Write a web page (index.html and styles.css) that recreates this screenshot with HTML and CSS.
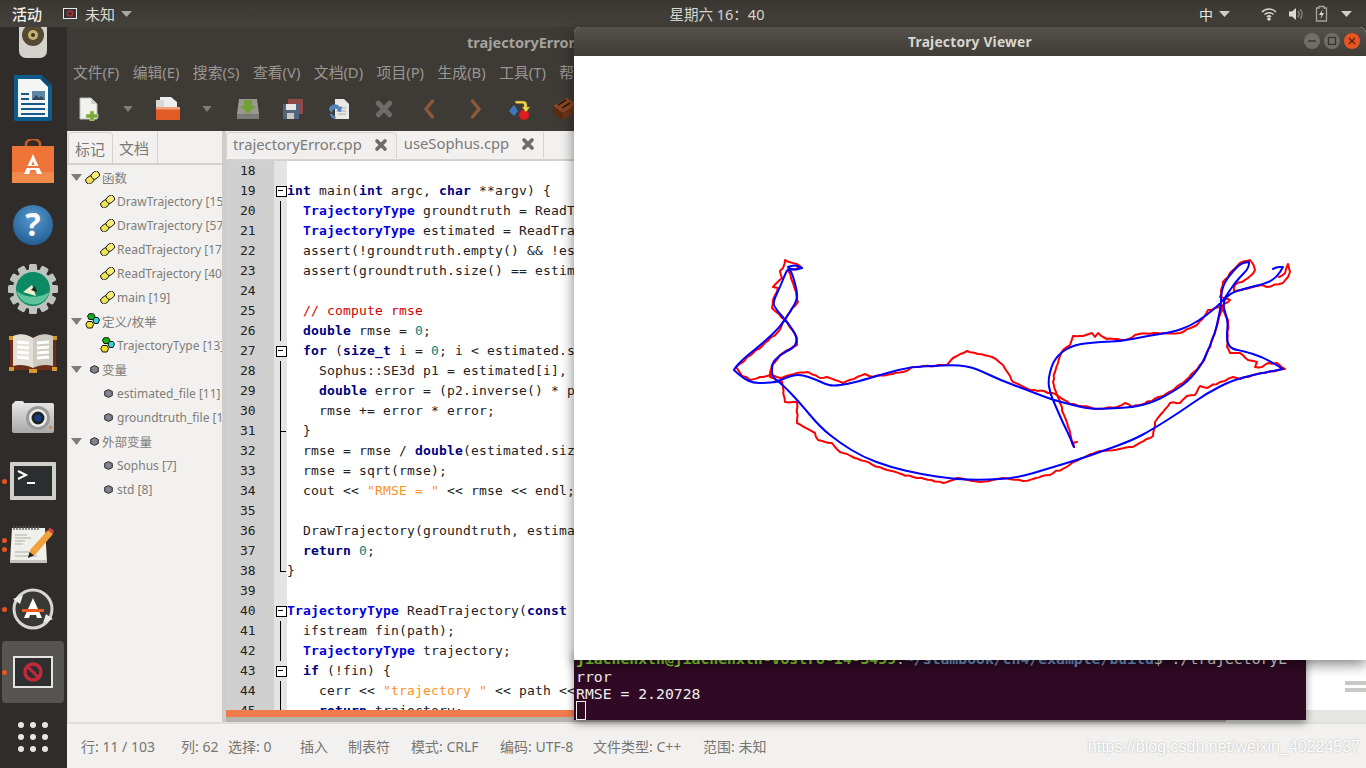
FILE: index.html
```html
<!DOCTYPE html>
<html lang="zh">
<head>
<meta charset="utf-8">
<title>Trajectory Viewer</title>
<link rel="stylesheet" href="styles.css">
</head>
<body>
<svg class="defs" width="0" height="0">
  <defs>
    <symbol id="fn" viewBox="0 0 15 13">
      <rect x="0.700" y="5.600" width="8.400" height="6.600" rx="2.600" transform="rotate(-38 4.900 8.900)" fill="#efe25a" stroke="#111" stroke-width=".9"/>
      <rect x="6.100" y="0.900" width="8.400" height="6.600" rx="2.600" transform="rotate(-38 10.300 4.200)" fill="#f6ec74" stroke="#111" stroke-width=".9"/>
    </symbol>
    <symbol id="en" viewBox="0 0 15 16">
      <path d="M4 .8h4.500L10 3.200 8.500 6.500H4L2.500 3.200z" fill="#12b812" stroke="#111"/>
      <path d="M9.500 4.500h3.500l1.500 2.500-1.500 3.500H9.500L8 7z" fill="#35d6e0" stroke="#111"/>
      <path d="M2.500 8.500h4.500L8.500 11.500 7 15H2.500L.8 11.500z" fill="#f0e22c" stroke="#111"/>
    </symbol>
    <symbol id="va" viewBox="0 0 10 10">
      <path d="M5 .7 9.200 2.700v4.600L5 9.300.8 7.300V2.700z" fill="#85828f" stroke="#111" stroke-width="1"/>
    </symbol>
    <symbol id="tri" viewBox="0 0 11 7">
      <path d="M0 0h11L5.500 7z" fill="#807d78"/>
    </symbol>
    <symbol id="x" viewBox="0 0 14 14">
      <path d="M3 3l8 8M11 3l-8 8" stroke="#6e6c69" stroke-width="3.600" stroke-linecap="round"/>
    </symbol>
  </defs>
</svg>

<div class="desktop">
  <header class="topbar">
    <div class="top-left">
      <span class="activities">活动</span>
      <span class="appmenu">
        <svg class="appicon" width="14" height="11" viewBox="0 0 14 11"><rect x=".5" y=".5" width="13" height="10" fill="#333" stroke="#e8e8e8"/><circle cx="7" cy="5.500" r="2.600" fill="none" stroke="#c22a3a" stroke-width="1.400"/></svg>
        <span class="appname">未知</span>
        <svg class="caret" width="11" height="6" viewBox="0 0 11 6"><path d="M0 0h11L5.500 6z" fill="#aaa7a0"/></svg>
      </span>
    </div>
    <div class="clock">星期六 16：40</div>
    <div class="tray">
      <span class="ime">中</span>
      <svg class="caret" width="11" height="6" viewBox="0 0 11 6"><path d="M0 0h11L5.500 6z" fill="#d0cdc6"/></svg>
      <svg class="tray-ico wifi" width="16" height="14" viewBox="0 0 16 14"><path d="M1 5c4-4 10-4 14 0M3.500 7.500c2.500-2.400 6.500-2.400 9 0M5.800 9.800c1.300-1.100 3.100-1.100 4.400 0" fill="none" stroke="#d8d5ce" stroke-width="1.500"/><circle cx="8" cy="12" r="1.700" fill="#e6e3dc"/></svg>
      <svg class="tray-ico" width="16" height="14" viewBox="0 0 16 14"><path d="M1 4.500h3L8 1v12L4 9.500H1z" fill="#dcd9d2"/><path d="M10 4c1.300 1.700 1.300 4.300 0 6M12.300 2.300c2.200 2.700 2.200 6.700 0 9.400" fill="none" stroke="#8c8a84" stroke-width="1.400"/></svg>
      <svg class="tray-ico" width="13" height="17" viewBox="0 0 13 17"><path d="M4 1.500h5v1.500h2.500v13h-10V3H4z" fill="none" stroke="#a8a59e" stroke-width="1.300"/><path d="M7.500 4.500 4 10h2.500L5.500 14 9 8H6.500z" fill="#dcd9d2"/></svg>
      <svg class="caret last" width="11" height="6" viewBox="0 0 11 6"><path d="M0 0h11L5.500 6z" fill="#d0cdc6"/></svg>
    </div>
  </header>

  <div class="workspace">
    <nav class="dock">
      <ul class="dock-list">
        <li class="dock-item">
          <svg width="34" height="52" viewBox="0 0 34 52"><rect x="3" y="1" width="28" height="50" rx="7" fill="#d4d2cc"/><circle cx="17" cy="28" r="11" fill="#544a34"/><circle cx="17" cy="28" r="5" fill="#c8b270"/><circle cx="17" cy="28" r="2" fill="#3c3426"/></svg>
        </li>
        <li class="dock-item">
          <svg width="42" height="50" viewBox="0 0 42 50"><path d="M2 3h28l10 10v34a2 2 0 0 1-2 2H4a2 2 0 0 1-2-2z" fill="#0d5c8e"/><path d="M30 3v10h10z" fill="#134a70"/><path d="M6 7h22l8 8v30H6z" fill="#f4f6f6"/><path d="M9 21h8v2H9zm0 5h8v2H9zm0 5h24v2H9zm0 5h24v2H9zm0 5h24v2H9z" fill="#14598c"/><rect x="20" y="19" width="13" height="9" fill="#5d88a5"/><path d="M20 28l4-5 3 3 2-2 4 4z" fill="#33495a"/></svg>
        </li>
        <li class="dock-item">
          <svg width="42" height="44" viewBox="0 0 42 44"><path d="M14 8V5a7 5 0 0 1 14 0v3" fill="none" stroke="#cd5a24" stroke-width="2.500"/><path d="M0 7h42v37H0z" fill="#ee7438"/><path d="M0 33h42v11H0z" fill="#f08a4c"/><path d="M21 15l9 20h-5l-1.500-4h-5L17 35h-5z" fill="#fff"/><path d="M12 27h18v2H12z" fill="#ee7438"/><path d="M19.500 26h3l-1.500-4z" fill="#ee7438"/></svg>
        </li>
        <li class="dock-item">
          <svg width="42" height="42" viewBox="0 0 42 42"><defs><radialGradient id="hb" cx=".5" cy=".35" r=".7"><stop offset="0" stop-color="#5a9bcf"/><stop offset="1" stop-color="#1d5a8f"/></radialGradient></defs><circle cx="21" cy="21" r="20" fill="url(#hb)"/><text x="21" y="32" class="help-q">?</text></svg>
        </li>
        <li class="dock-item">
          <svg width="50" height="50" viewBox="0 0 50 50"><circle cx="25" cy="25" r="20" fill="#bfc3c0"/><g fill="#bfc3c0"><rect x="21" y="0" width="8" height="50" rx="1.500"/><rect x="21" y="0" width="8" height="50" rx="1.500" transform="rotate(30 25 25)"/><rect x="21" y="0" width="8" height="50" rx="1.500" transform="rotate(60 25 25)"/><rect x="21" y="0" width="8" height="50" rx="1.500" transform="rotate(90 25 25)"/><rect x="21" y="0" width="8" height="50" rx="1.500" transform="rotate(120 25 25)"/><rect x="21" y="0" width="8" height="50" rx="1.500" transform="rotate(150 25 25)"/></g><circle cx="25" cy="25" r="17" fill="#0c8a63"/><path d="M8.500 27a17 17 0 0 0 33 1C31 35 18 34 8.500 27z" fill="#5fc39e"/><path d="M15 28l9-7 4 11z" fill="#efeccc"/><path d="M23 26l4-4 2 6z" fill="#222"/></svg>
        </li>
        <li class="dock-item">
          <svg width="48" height="42" viewBox="0 0 48 42"><path d="M1 5h46v33H1z" fill="#6b2e1a"/><path d="M0 4h5v4H0zm43 0h5v4h-5zM0 35h5v4H0zm43 0h5v4h-5zM20 37h8v4h-8z" fill="#d7982a"/><path d="M4 4c7-3 14-2 20 2v30c-6-3-13-4-20-2z" fill="#e4e0d8"/><path d="M44 4c-7-3-14-2-20 2v30c6-3 13-4 20-2z" fill="#cfcac0"/><path d="M8 10l12 1M8 15l12 1M8 20l12 1M8 25l12 1M28 11l12-1M28 16l12-1M28 21l12-1M28 26l12-1" stroke="#fff" stroke-width="3"/></svg>
        </li>
        <li class="dock-item">
          <svg width="44" height="34" viewBox="0 0 44 34"><defs><linearGradient id="cam" x1="0" y1="0" x2="0" y2="1"><stop offset="0" stop-color="#e4e4e4"/><stop offset="1" stop-color="#a9a9a9"/></linearGradient></defs><rect x="1" y="3" width="42" height="30" rx="2" fill="url(#cam)"/><rect x="3" y="1" width="10" height="4" rx="2" fill="#e6e6e6"/><circle cx="27" cy="18" r="12" fill="#9a9a9a"/><circle cx="27" cy="18" r="9" fill="#eeeeee"/><circle cx="27" cy="18" r="6.500" fill="#222"/><circle cx="27" cy="18" r="3.500" fill="#123a88"/><rect x="38" y="26" width="3" height="3" fill="#e08a24"/></svg>
        </li>
        <li class="dock-item running">
          <svg width="46" height="38" viewBox="0 0 46 38"><rect width="46" height="38" rx="1" fill="#cfcfcc"/><rect x="4" y="4" width="38" height="30" fill="#2b2d2e"/><path d="M8 9l8 4-8 4" fill="none" stroke="#fff" stroke-width="2"/><path d="M17 20h8v2h-8z" fill="#fff"/></svg>
        </li>
        <li class="dock-item running double">
          <svg width="46" height="38" viewBox="0 0 46 38"><path d="M2 2h33l2 34H0z" fill="#f0f0ea"/><path d="M0 34h37v3H0z" fill="#c4c4be"/><path d="M4 0v4m3-4v4m3-4v4m3-4v4m3-4v4m3-4v4m3-4v4m3-4v4m3-4v4" stroke="#555" stroke-width="1.300"/><path d="M5 9h12M5 12h16M5 15h10M5 18h8M5 26h14M5 30h22" stroke="#aaa" stroke-width="1"/><path d="M20 24 38 4l5 4-18 21-6 2z" fill="#f2a23a"/><path d="M38 4l2-2.500 4 3.500-1 3z" fill="#d8404a"/><path d="M18 32l1.500-6 4.500 3.500z" fill="#222"/></svg>
        </li>
        <li class="dock-item running">
          <svg width="44" height="44" viewBox="0 0 44 44"><circle cx="22" cy="22" r="19" fill="#3a3835" stroke="#d6d6d4" stroke-width="3"/><path d="M22 11l9 20h-5l-1-3h-6l-1 3h-5z" fill="#fff"/><path d="M11 22h22v3H11z" fill="#e85a1e"/><path d="M2 12l10-4-3 9zM42 32l-10 4 3-9z" fill="#e9e9e7"/></svg>
        </li>
        <li class="dock-item running active">
          <svg width="40" height="32" viewBox="0 0 40 32"><rect x="1" y="1" width="38" height="30" fill="#2f2f2f" stroke="#e4e4e2" stroke-width="2"/><circle cx="20" cy="16" r="8" fill="none" stroke="#c2283a" stroke-width="3.500"/><path d="M14.500 10.500l11 11" stroke="#c2283a" stroke-width="3"/></svg>
        </li>
        <li class="dock-item">
          <svg width="32" height="32" viewBox="0 0 32 32" fill="#e8e6e3"><circle cx="4" cy="4" r="3"/><circle cx="16" cy="4" r="3"/><circle cx="28" cy="4" r="3"/><circle cx="4" cy="16" r="3"/><circle cx="16" cy="16" r="3"/><circle cx="28" cy="16" r="3"/><circle cx="4" cy="28" r="3"/><circle cx="16" cy="28" r="3"/><circle cx="28" cy="28" r="3"/></svg>
        </li>
      </ul>
    </nav>

    <main class="geany">
      <div class="g-title">trajectoryError.cpp - /home/slambook/ch4/example - Geany</div>
      <div class="menubar">
        <span>文件(F)</span><span>编辑(E)</span><span>搜索(S)</span><span>查看(V)</span><span>文档(D)</span><span>项目(P)</span><span>生成(B)</span><span>工具(T)</span><span>帮助(H)</span>
      </div>
      <div class="toolbar">
        <svg class="t-new" width="24" height="24" viewBox="0 0 24 24"><path d="M2 1h11l6 6v15H2z" fill="#f1f1ee" stroke="#bdbdb8"/><path d="M13 7V1l6 6z" fill="#cfcfca"/><path d="M12 14h4v3h4v4h-4v3h-4v-3H8v-4h4z" fill="#7ba93c" stroke="#d8e6c0" stroke-width=".6"/></svg>
        <svg class="t-drop" width="10" height="6"><use href="#tri"/></svg>
        <svg class="t-open" width="26" height="24" viewBox="0 0 26 24"><path d="M5 0h11l6 5v8H5z" fill="#eee"/><path d="M1 3h8v9H1z" fill="#d8d8d4"/><path d="M1 10h24v13H1z" fill="#e35c28"/><path d="M1 10h24v2.500H1z" fill="#f2a07a"/></svg>
        <svg class="t-drop" width="10" height="6"><use href="#tri"/></svg>
        <svg class="t-save" width="24" height="22" viewBox="0 0 24 22"><path d="M3 1h18l2 15v5H1v-5z" fill="#9a9892"/><path d="M1 16h22v5H1z" fill="#7d7b75"/><path d="M8 2h8v6h4l-8 8-8-8h4z" fill="#74a034"/></svg>
        <svg class="t-saveall" width="22" height="22" viewBox="0 0 22 22"><rect x="6" y="1" width="15" height="15" fill="#8f4a48"/><rect x="1" y="6" width="16" height="15" fill="#51667c"/><rect x="4" y="6" width="10" height="6" fill="#e6e6e6"/><rect x="5" y="15" width="7" height="6" fill="#c7c7c7"/></svg>
        <svg class="t-reload" width="22" height="22" viewBox="0 0 22 22"><path d="M7 1h9l5 5v15H7z" fill="#e8e8e6"/><path d="M10 10h8M10 13h8M10 16h8" stroke="#aaa"/><path d="M1 12a6 6 0 0 1 11-3l2-1-1 6-5-1 2-1a3.500 3.500 0 0 0-6 3z" fill="#4f86bd"/><path d="M2 15l6 4-1 2a6 6 0 0 1-5-6z" fill="#4f86bd"/></svg>
        <svg class="t-close" width="20" height="20" viewBox="0 0 14 14"><use href="#x"/></svg>
        <svg class="t-back" width="12" height="20" viewBox="0 0 12 20"><path d="M9.500 2 3 10l6.500 8" fill="none" stroke="#8b5a3a" stroke-width="3.400" stroke-linecap="round"/></svg>
        <svg class="t-fwd" width="12" height="20" viewBox="0 0 12 20"><path d="M2.500 2 9 10l-6.500 8" fill="none" stroke="#8b5a3a" stroke-width="3.400" stroke-linecap="round"/></svg>
        <svg class="t-comp" width="24" height="24" viewBox="0 0 24 24"><path d="M6 8 10 14 6 19 1 14z" fill="#3f78c0"/><circle cx="16" cy="18" r="5" fill="#e01b22"/><path d="M7 4h8c3 0 4 2 4 4v2h3l-4 5-4-5h2V8c0-1-.5-1.500-2-1.500H8z" fill="#f1d84a" stroke="#8b7a22" stroke-width=".5"/></svg>
        <svg class="t-build" width="26" height="24" viewBox="0 0 26 24"><path d="M1 9 15 1l10 6-14 9z" fill="#8d4522"/><path d="M1 9l10 7v7L1 16z" fill="#5b2c14"/><path d="M11 16 25 7v7L11 23z" fill="#6e3519"/><path d="M6 8l8-5M10 11l8-5" stroke="#2c1a0f" stroke-width="1.500"/></svg>
      </div>

      <div class="panes">
        <aside class="sidebar">
          <div class="side-tabs">
            <span class="side-tab on">标记</span><span class="side-tab">文档</span>
          </div>
          <ul class="tree">
            <li class="group"><svg class="arrow"><use href="#tri"/></svg><svg class="ico16" viewBox="0 0 15 13"><use href="#fn"/></svg>函数</li>
            <li class="leaf"><svg class="ico16" viewBox="0 0 15 13"><use href="#fn"/></svg>DrawTrajectory [15]</li>
            <li class="leaf"><svg class="ico16" viewBox="0 0 15 13"><use href="#fn"/></svg>DrawTrajectory [57]</li>
            <li class="leaf"><svg class="ico16" viewBox="0 0 15 13"><use href="#fn"/></svg>ReadTrajectory [17]</li>
            <li class="leaf"><svg class="ico16" viewBox="0 0 15 13"><use href="#fn"/></svg>ReadTrajectory [40]</li>
            <li class="leaf"><svg class="ico16" viewBox="0 0 15 13"><use href="#fn"/></svg>main [19]</li>
            <li class="group"><svg class="arrow"><use href="#tri"/></svg><svg class="ico16 tall" viewBox="0 0 15 16"><use href="#en"/></svg>定义/枚举</li>
            <li class="leaf"><svg class="ico16 tall" viewBox="0 0 15 16"><use href="#en"/></svg>TrajectoryType [13]</li>
            <li class="group var"><svg class="arrow"><use href="#tri"/></svg><svg class="ico10" viewBox="0 0 10 10"><use href="#va"/></svg>变量</li>
            <li class="leaf var"><svg class="ico10" viewBox="0 0 10 10"><use href="#va"/></svg>estimated_file [11]</li>
            <li class="leaf var"><svg class="ico10" viewBox="0 0 10 10"><use href="#va"/></svg>groundtruth_file [10]</li>
            <li class="group var"><svg class="arrow"><use href="#tri"/></svg><svg class="ico10" viewBox="0 0 10 10"><use href="#va"/></svg>外部变量</li>
            <li class="leaf var"><svg class="ico10" viewBox="0 0 10 10"><use href="#va"/></svg>Sophus [7]</li>
            <li class="leaf var"><svg class="ico10" viewBox="0 0 10 10"><use href="#va"/></svg>std [8]</li>
          </ul>
        </aside>
        <div class="side-scroll"></div>
        <section class="editor">
          <div class="doc-tabs">
            <span class="doc-tab on">trajectoryError.cpp<svg class="tab-x" width="14" height="14"><use href="#x"/></svg></span>
            <span class="doc-tab">useSophus.cpp<svg class="tab-x" width="14" height="14"><use href="#x"/></svg></span>
          </div>
          <div class="code">
            <div class="ln"><b>18</b><i></i><code></code></div>
            <div class="ln"><b>19</b><i class="box"></i><code><span class="k">int</span> main(<span class="k">int</span> argc, <span class="k">char</span> **argv) {</code></div>
            <div class="ln"><b>20</b><i class="bar"></i><code>  <span class="t">TrajectoryType</span> groundtruth = ReadTrajectory(groundtruth_file);</code></div>
            <div class="ln"><b>21</b><i class="bar"></i><code>  <span class="t">TrajectoryType</span> estimated = ReadTrajectory(estimated_file);</code></div>
            <div class="ln"><b>22</b><i class="bar"></i><code>  assert(!groundtruth.empty() &amp;&amp; !estimated.empty());</code></div>
            <div class="ln"><b>23</b><i class="bar"></i><code>  assert(groundtruth.size() == estimated.size());</code></div>
            <div class="ln"><b>24</b><i class="bar"></i><code></code></div>
            <div class="ln"><b>25</b><i class="bar"></i><code>  <span class="c">// compute rmse</span></code></div>
            <div class="ln"><b>26</b><i class="bar"></i><code>  <span class="k">double</span> rmse = <span class="n">0</span>;</code></div>
            <div class="ln"><b>27</b><i class="box"></i><code>  <span class="k">for</span> (<span class="k">size_t</span> i = <span class="n">0</span>; i &lt; estimated.size(); i++) {</code></div>
            <div class="ln"><b>28</b><i class="bar"></i><code>    Sophus::SE3d p1 = estimated[i], p2 = groundtruth[i];</code></div>
            <div class="ln"><b>29</b><i class="bar"></i><code>    <span class="k">double</span> error = (p2.inverse() * p1).log().norm();</code></div>
            <div class="ln"><b>30</b><i class="bar"></i><code>    rmse += error * error;</code></div>
            <div class="ln"><b>31</b><i class="tick"></i><code>  }</code></div>
            <div class="ln"><b>32</b><i class="bar"></i><code>  rmse = rmse / <span class="k">double</span>(estimated.size());</code></div>
            <div class="ln"><b>33</b><i class="bar"></i><code>  rmse = sqrt(rmse);</code></div>
            <div class="ln"><b>34</b><i class="bar"></i><code>  cout &lt;&lt; <span class="s">"RMSE = "</span> &lt;&lt; rmse &lt;&lt; endl;</code></div>
            <div class="ln"><b>35</b><i class="bar"></i><code></code></div>
            <div class="ln"><b>36</b><i class="bar"></i><code>  DrawTrajectory(groundtruth, estimated);</code></div>
            <div class="ln"><b>37</b><i class="bar"></i><code>  <span class="k">return</span> <span class="n">0</span>;</code></div>
            <div class="ln"><b>38</b><i class="end"></i><code>}</code></div>
            <div class="ln"><b>39</b><i></i><code></code></div>
            <div class="ln"><b>40</b><i class="box"></i><code><span class="t">TrajectoryType</span> ReadTrajectory(<span class="k">const</span> string &amp;path) {</code></div>
            <div class="ln"><b>41</b><i class="bar"></i><code>  ifstream fin(path);</code></div>
            <div class="ln"><b>42</b><i class="bar"></i><code>  <span class="t">TrajectoryType</span> trajectory;</code></div>
            <div class="ln"><b>43</b><i class="box"></i><code>  <span class="k">if</span> (!fin) {</code></div>
            <div class="ln"><b>44</b><i class="bar"></i><code>    cerr &lt;&lt; <span class="s">"trajectory "</span> &lt;&lt; path &lt;&lt; <span class="s">" not found."</span> &lt;&lt; endl;</code></div>
            <div class="ln"><b>45</b><i class="bar"></i><code>    <span class="k">return</span> trajectory;</code></div>
          </div>
          <div class="orange"></div>
          <div class="hscroll"></div>
          <div class="minimap"></div>
        </section>
      </div>

      <footer class="status">
        <span class="s-line">行: 11 / 103</span>
        <span class="s-col">列: 62</span>
        <span class="s-sel">选择: 0</span>
        <span class="s-ins">插入</span>
        <span class="s-tab">制表符</span>
        <span class="s-mode">模式: CRLF</span>
        <span class="s-enc">编码: UTF-8</span>
        <span class="s-type">文件类型: C++</span>
        <span class="s-scope">范围: 未知</span>
        <span class="watermark">https://blog.csdn.net/weixin_40224537</span>
      </footer>
    </main>
  </div>

  <section class="terminal">
    <div class="t-l"><span class="p-g">jiachenxth@jiachenxth-Vostro-14-3459</span>:<span class="p-b">~/slambook/ch4/example/build</span>$ ./trajectoryE</div>
    <div class="t-l">rror</div>
    <div class="t-l">RMSE = 2.20728</div>
    <div class="cursor"></div>
  </section>

  <section class="viewer">
    <div class="v-title">
      <span>Trajectory Viewer</span>
      <div class="v-btns">
        <svg width="16" height="16" viewBox="0 0 16 16"><circle cx="8" cy="8" r="8" fill="#716e68"/><path d="M4 8h8" stroke="#35332f" stroke-width="1.300"/></svg>
        <svg width="16" height="16" viewBox="0 0 16 16"><circle cx="8" cy="8" r="8" fill="#716e68"/><rect x="4.500" y="4.500" width="7" height="7" fill="none" stroke="#35332f" stroke-width="1.200"/></svg>
        <svg width="16" height="16" viewBox="0 0 16 16"><circle cx="8" cy="8" r="8" fill="#e95420"/><path d="M5 5l6 6M11 5l-6 6" stroke="#4a2312" stroke-width="1.200"/></svg>
      </div>
    </div>
    <svg class="plot" width="792" height="604" viewBox="574 56 792 604">
      <g fill="none" stroke-width="2" stroke-linejoin="round" stroke-linecap="round">
        <polyline class="noisy" stroke="#f00" points="1077,442 1072,443 1074,447 1071,437 1068,427 1064,415 1060,403 1056,392 1053,382 1055,372 1058,363 1060,356 1063,350 1070,345 1073,336 1083,336 1092,333 1095,337 1098,333 1103,337 1107,339 1125,340 1135,335 1157,333 1180,333 1197,325 1204,317 1208,310 1222,306 1230,300 1220,297 1221,290 1223,282 1232,271 1240,263 1250,260 1253,264 1255,270 1248,278 1235,285 1234,292 1253,287 1262,285 1267,287 1283,283 1288,277 1290,272 1288,264 1285,273 1279,277"/>
        <polyline class="noisy" stroke="#f00" points="1222,306 1218,322 1213,337 1208,350 1202,363 1183,383 1163,396 1140,405 1132,407 1125,403 1117,407 1097,409 1070,404 1057,395 1044,391 1030,390 1013,382 1008,373 1003,365 992,357 978,354 967,351 953,358 947,365 912,367 903,372 873,377 865,374 843,383 835,380 827,377 820,378 808,372 790,375 780,378 770,375 760,377 750,380 742,376 736,367 753,353 777,333 790,312 798,302 796,292 793,283 788,270 802,268 797,264 785,260 783,268 780,271 782,278 773,287 778,288 773,300 772,308 785,320 797,338 797,345 780,355 772,365 770,377 782,382 785,402 797,402 797,423 815,433 818,440 832,443 840,452 887,470 913,477 943,483 957,478 980,482 1003,478 1023,481 1050,475 1080,459 1097,452 1133,447 1153,436 1155,422 1163,412 1170,403 1180,403 1187,396 1195,395 1200,386 1207,388 1220,382 1233,377 1240,379 1257,374 1285,369 1277,363 1268,363 1262,367 1255,367 1257,362 1248,360 1240,353 1230,353 1227,347 1228,320 1222,306"/>
        <polyline class="smooth" stroke="#00f" points="1074,447 1069,435 1063,423 1056,407 1050,393 1048,380 1052,365 1056,358 1062,352 1070,347 1080,344 1090,343 1100,342 1123,341 1147,336 1173,332 1190,326 1207,315 1222,302 1228,293 1235,283 1241,276 1247,270 1249,265 1249,262 1249,262 1242,263 1236,268 1230,275 1225,282 1222,290 1221,298 1221,305 1218,320 1215,333 1209,348 1203,362 1196,372 1187,382 1177,389 1167,395 1155,401 1143,405 1132,407 1120,408 1097,409 1085,408 1073,405 1053,400 1027,390 1000,380 977,369 965,366 953,365 933,366 910,367 887,373 863,380 848,384 833,386 825,384 817,380 800,374 787,377 777,382 765,383 753,383 743,378 735,371 734,370 734,370 735,368 743,359 763,343 780,327 790,312 797,300 797,293 796,287 792,273 788,267 788,267 795,265 802,268 802,268 795,270 788,268 784,277 780,287 773,302 775,308 787,322 793,330 797,338 795,347 785,352 778,357 773,362 772,367 772,377 783,385 800,403 820,427 840,443 863,457 890,467 920,474 953,479 983,480 1017,478 1050,468 1080,459 1100,452 1133,440 1153,429 1180,412 1207,393 1233,380 1257,374 1283,369 1283,369 1263,357 1243,351 1232,349 1227,343 1227,332 1228,320 1222,303 1230,293 1247,288 1267,283 1277,277 1283,267 1283,267 1277,267 1273,269"/>
      </g>
    </svg>
  </section>
</div>
<script src="plot.js"></script>
</body>
</html>
```

FILE: styles.css
```css
* { box-sizing: border-box; margin: 0; padding: 0; }
html, body { width: 1366px; height: 768px; overflow: hidden; }
body { font-family: "Noto Sans", "Noto Sans CJK SC", sans-serif; background: #2f2c2a; position: relative; }
ul { list-style: none; }
.defs { position: absolute; }

.desktop { width: 1366px; height: 768px; display: flex; flex-direction: column; position: relative; overflow: hidden; }

/* top bar */
.topbar { height: 27px; flex: none; display: grid; grid-template-columns: 1fr auto 1fr; align-items: center; background: linear-gradient(#3a3733, #45423c); color: #e8e6e1; font-size: 15px; position: relative; z-index: 3; }
.top-left { display: flex; align-items: center; }
.activities { margin-left: 12px; color: #f2f0ec; font-weight: 500; }
.appmenu { margin-left: 21px; display: flex; align-items: center; color: #dedbd5; }
.appname { margin-left: 8px; }
.appmenu .caret { margin-left: 6px; }
.clock { color: #d9d6d0; font-size: 14.500px; padding-left: 68px; }
.tray { display: flex; align-items: center; justify-content: flex-end; padding-right: 14px; }
.ime { color: #e8e6e1; font-size: 14px; margin-right: 6px; }
.tray .wifi { margin-left: 31px; }
.tray-ico { margin-left: 11px; }
.tray .caret.last { margin-left: 13px; }

/* layout */
.workspace { flex: 1; display: flex; min-height: 0; }

/* dock */
.dock { width: 67px; flex: none; background: #302c2a; overflow: hidden; }
.dock-list { margin-top: -26px; display: flex; flex-direction: column; }
.dock-item { height: 64px; flex: none; display: flex; align-items: center; justify-content: center; position: relative; margin: 0 3px 0 2px; border-radius: 4px; }
.dock-item.active { background: #575552; height: 62px; margin-bottom: 2px; }
.dock-item.running::before { content: ""; position: absolute; left: 0; top: 50%; width: 5px; height: 5px; margin-top: -2.500px; border-radius: 50%; background: #e95420; }
.dock-item.double::before { margin-top: -7px; box-shadow: 0 9px 0 #e95420; }
.help-q { font-family: "Noto Sans", sans-serif; font-size: 32px; font-weight: 700; fill: #fff; text-anchor: middle; }

/* geany */
.geany { flex: 1; min-width: 0; display: flex; flex-direction: column; background: #3e3b37; }
.g-title { height: 30px; flex: none; padding-left: 400px; display: flex; align-items: center; justify-content: flex-start; font-size: 14.500px; font-weight: 700; color: #a5a29c; white-space: nowrap; overflow: hidden; }
.menubar { height: 30px; flex: none; display: flex; align-items: center; gap: 13.500px; padding: 0 0 2px 6px; font-size: 14.800px; color: #9a9792; white-space: nowrap; }
.menubar span { flex: none; }
.toolbar { height: 44px; flex: none; display: flex; align-items: center; padding-left: 11px; }
.t-drop { margin-left: 21px; }
.t-open { margin-left: 22px; }
.t-open + .t-drop { margin-left: 21px; }
.t-save { margin-left: 24px; }
.t-saveall { margin-left: 22px; }
.t-reload { margin-left: 24px; }
.t-close { margin-left: 24px; }
.t-back { margin-left: 29px; }
.t-fwd { margin-left: 35px; }
.t-comp { margin-left: 26px; }
.t-build { margin-left: 20px; }

.panes { flex: 1; min-height: 0; display: flex; background: #f2f1ef; }

/* sidebar */
.sidebar { width: 155px; flex: none; background: #f2f1ef; color: #7f7d79; font-size: 12px; overflow: hidden; border-left: 1px solid #dcdad7; }
.side-tabs { height: 34px; display: flex; align-items: stretch; border-bottom: 2px solid #d4d2ce; padding-top: 1px; }
.side-tab { width: 45px; padding-left: 6px; font-size: 15px; line-height: 32px; color: #7a7875; border-right: 1px solid #d4d2ce; white-space: nowrap; }
.side-tab.on { border-radius: 4px 4px 0 0; border: 1px solid #d4d2ce; border-bottom: none; }
.tree li { height: 24px; display: flex; align-items: center; white-space: nowrap; }
.tree .group { font-size: 12.500px; }
.arrow { width: 11px; height: 7px; margin-left: 3px; flex: none; }
.ico16 { width: 15px; height: 13px; flex: none; margin-left: 3px; margin-right: 2px; }
.ico16.tall { height: 16px; }
.ico10 { width: 9px; height: 9px; flex: none; margin-left: 8px; margin-right: 3px; }
.leaf { padding-left: 29px; }
.leaf.var { padding-left: 28px; }
.leaf.var .ico10 { margin-left: 8px; margin-right: 4px; }

.side-scroll { width: 4px; flex: none; background: #cfcdc9; }

/* editor */
.editor { flex: 1; min-width: 0; display: flex; flex-direction: column; position: relative; background: #fff; }
.doc-tabs { height: 30px; flex: none; display: flex; background: #f2f1ef; border-bottom: 2px solid #d4d2ce; padding-top: 1px; }
.doc-tab { height: 26px; padding-left: 7px; font-size: 14.800px; line-height: 23px; color: #7c7a77; display: flex; align-items: flex-start; white-space: nowrap; border-right: 1px solid #d4d2ce; }
.doc-tab.on { padding-left: 6px; border: 1px solid #d4d2ce; border-bottom: none; border-radius: 4px 4px 0 0; background: #f0efed; }
.tab-x { margin: 5px 8px 0 12px; flex: none; }

.code { flex: 1; min-height: 0; overflow: hidden; font-family: "DejaVu Sans Mono", monospace; font-size: 13px; background: #fff; }
.ln { height: 20px; display: flex; line-height: 20px; }
.ln b { width: 48px; flex: none; background: #cfcfcf; color: #222; font-weight: 400; text-align: left; padding-left: 14px; }
.ln i { width: 13px; flex: none; background: #e4e4e4; position: relative; display: block; }
.ln code { font-family: inherit; white-space: pre; letter-spacing: .17px; color: #222; }
.k { color: #00007f; font-weight: 700; }
.t { color: #0000d8; font-weight: 700; }
.s { color: #ff901e; }
.c { color: #d00000; }
.n { color: #007f7f; }
.bar::before, .tick::before, .end::before { content: ""; position: absolute; left: 6px; top: 0; bottom: 0; width: 1px; background: #000; }
.end::before { bottom: 10px; }
.tick::after, .end::after { content: ""; position: absolute; left: 6px; top: 10px; width: 6px; height: 1px; background: #000; }
.box::before { content: ""; position: absolute; left: 2px; top: 5px; width: 9px; height: 9px; border: 1px solid #000; background: #fff; z-index: 1; }
.box::after { content: ""; position: absolute; left: 4px; top: 9px; width: 5px; height: 1px; background: #000; z-index: 2; }
.orange { height: 7px; flex: none; background: linear-gradient(90deg, #ef7b4f 0 1000px, #e6e6e3 1000px); }
.hscroll { height: 5px; flex: none; background: linear-gradient(90deg, #b5b4af 0 1000px, #e6e6e3 1000px); }
.minimap { position: absolute; right: 0; top: 550px; width: 21px; height: 12px; background: repeating-linear-gradient(#c8c8c4 0 4px, #fff 4px 7px); }

/* status */
.status { height: 46px; flex: none; display: flex; align-items: center; padding-left: 14px; background: #f2f1ef; color: #777572; font-size: 14px; white-space: nowrap; border-top: 2px solid #dfded9; position: relative; }
.status span { flex: none; }
.s-line { width: 100px; }
.s-col { width: 47px; }
.s-sel { width: 72px; }
.s-ins { width: 48px; }
.s-tab { width: 63px; }
.s-mode { width: 89px; }
.s-enc { width: 93px; }
.s-type { width: 110px; }
.status .watermark { position: absolute; right: 6px; top: 14px; font-family: "Liberation Sans", sans-serif; font-size: 16px; color: #fff; text-shadow: 0 0 2px #a8a7a4; }

/* terminal window */
.terminal { position: absolute; left: 574px; top: 650px; width: 732px; height: 70px; background: #300a24; color: #eeeeec; font-family: "DejaVu Sans Mono", monospace; font-size: 14.770px; line-height: 18px; padding: 0 0 0 2px; overflow: hidden; box-shadow: 0 3px 8px rgba(0,0,0,.45); z-index: 4; }
.t-l { height: 17.500px; white-space: pre; }
.p-g { color: #8ae234; font-weight: 700; }
.p-b { color: #729fcf; font-weight: 700; }
.cursor { position: absolute; left: 2px; bottom: 0; width: 10px; height: 19px; border: 1px solid #eeeeec; }

/* viewer window */
.viewer { position: absolute; left: 574px; top: 27px; width: 792px; height: 633px; background: #fff; border-radius: 6px 6px 0 0; box-shadow: 0 4px 14px rgba(0,0,0,.5); z-index: 5; display: flex; flex-direction: column; }
.v-title { height: 29px; flex: none; display: flex; align-items: center; justify-content: center; position: relative; background: linear-gradient(#54514b, #403d38); color: #d8d5cf; font-size: 13.800px; font-weight: 700; border-radius: 6px 6px 0 0; letter-spacing: .2px; }
.v-btns { position: absolute; right: 6px; top: 6px; display: flex; gap: 4px; }
.plot { display: block; flex: none; }
```

FILE: plot.js
```js
(function () {
  var NS = "http://www.w3.org/2000/svg";
  var seed = 7;
  function rnd() {
    seed = (seed * 16807) % 2147483647;
    return seed / 2147483647 - 0.5;
  }
  function read(el) {
    return el.getAttribute("points").trim().split(/\s+/).map(function (p) {
      return p.split(",").map(Number);
    });
  }
  function smoothPath(pts) {
    var d = "M" + pts[0][0] + " " + pts[0][1];
    for (var i = 1; i < pts.length - 1; i++) {
      var mx = (pts[i][0] + pts[i + 1][0]) / 2;
      var my = (pts[i][1] + pts[i + 1][1]) / 2;
      d += "Q" + pts[i][0] + " " + pts[i][1] + " " + mx.toFixed(1) + " " + my.toFixed(1);
    }
    var last = pts[pts.length - 1];
    return d + "L" + last[0] + " " + last[1];
  }
  function replace(el, d) {
    var path = document.createElementNS(NS, "path");
    path.setAttribute("d", d);
    path.setAttribute("stroke", el.getAttribute("stroke"));
    el.parentNode.replaceChild(path, el);
  }
  document.querySelectorAll("polyline.smooth").forEach(function (el) {
    replace(el, smoothPath(read(el)));
  });
  document.querySelectorAll("polyline.noisy").forEach(function (el) {
    var pts = read(el), out = [pts[0]];
    for (var i = 1; i < pts.length; i++) {
      var a = pts[i - 1], b = pts[i];
      var len = Math.hypot(b[0] - a[0], b[1] - a[1]);
      var n = Math.max(1, Math.round(len / 4));
      for (var k = 1; k <= n; k++) {
        var t = k / n, j = k === n ? 0 : 1.5;
        out.push([a[0] + (b[0] - a[0]) * t + rnd() * j, a[1] + (b[1] - a[1]) * t + rnd() * j]);
      }
    }
    var d = "M" + out.map(function (p) { return p[0].toFixed(1) + " " + p[1].toFixed(1); }).join("L");
    replace(el, d);
  });
})();
```
